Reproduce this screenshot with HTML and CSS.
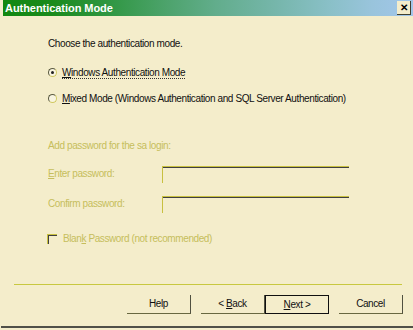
FILE: index.html
```html
<!DOCTYPE html>
<html lang="en">
<head>
    <meta charset="UTF-8">
    <meta name="viewport" content="width=device-width, initial-scale=1.0">
    <title>Authentication Mode</title>
    <link rel="stylesheet" href="styles.css">
</head>
<body>
    <div class="window">
        <div class="titlebar">
            <span class="title">Authentication Mode</span>
            <span class="close">&#x2715;</span>
        </div>

        <div class="content">
            <p class="intro">Choose the authentication mode.</p>

            <div class="option first">
                <span class="radio checked"></span>
                <span class="focus"><u>W</u>indows Authentication Mode</span>
            </div>
            <div class="option">
                <span class="radio"></span>
                <span><u>M</u>ixed Mode (Windows Authentication and SQL Server Authentication)</span>
            </div>

            <div class="sa">
                <p class="sa-title">Add password for the sa login:</p>
                <div class="field">
                    <span class="field-label"><u>E</u>nter password:</span>
                    <span class="box"></span>
                </div>
                <div class="field">
                    <span class="field-label">Confirm password:</span>
                    <span class="box"></span>
                </div>
                <div class="check">
                    <span class="checkbox"></span>
                    <span>Blan<u>k</u> Password (not recommended)</span>
                </div>
            </div>
        </div>

        <div class="separator"></div>

        <div class="buttons">
            <span class="btn">Help</span>
            <span class="btn gap">&lt; <u>B</u>ack</span>
            <span class="btn default"><u>N</u>ext &gt;</span>
            <span class="btn gap">Cancel</span>
        </div>
        <div class="bottom-edge"></div>
    </div>
</body>
</html>
```

FILE: styles.css
```css
body {
    margin: 0;
    padding: 0;
    background-color: #f4edcb;
    font-family: "Liberation Sans", Arial, sans-serif;
    font-size: 10px;
    letter-spacing: -0.4px;
    color: #101010;
}
.window {
    width: 413px;
    height: 330px;
    overflow: hidden;
}
.titlebar {
    height: 16px;
    margin-left: 3px;
    display: flex;
    align-items: center;
    justify-content: space-between;
    background: linear-gradient(to right, #118811 0%, #1a8a1c 12%, #2e9640 25%, #4da36c 40%, #62ad8c 52%, #78b7ae 68%, #8ac0c8 80%, #99c4dc 90%, #a2c6ea 100%);
}
.title {
    color: #ffffff;
    font-weight: bold;
    font-size: 11px;
    letter-spacing: -0.05px;
    padding-left: 2px;
}
.close {
    width: 13px;
    height: 13px;
    margin-right: 2px;
    background: #f4edcb;
    border-right: 1px solid #404030;
    border-bottom: 1px solid #404030;
    font-size: 10px;
    font-weight: bold;
    letter-spacing: 0;
    line-height: 13px;
    text-align: center;
    color: #000;
}
.content {
    padding-left: 48px;
}
.intro {
    margin: 21px 0 0;
    line-height: 13px;
}
.option {
    display: flex;
    align-items: center;
    gap: 5px;
    height: 13px;
    margin-top: 13px;
}
.option.first {
    margin-top: 16px;
}
.radio {
    width: 7px;
    height: 7px;
    border-radius: 50%;
    border: 1px solid;
    border-color: #5a5a40 #d0c860 #d0c860 #5a5a40;
    background: #f8f4e0;
    position: relative;
}
.radio.checked::after {
    content: "";
    position: absolute;
    left: 2px;
    top: 2px;
    width: 3px;
    height: 3px;
    border-radius: 50%;
    background: #202020;
}
.focus {
    border-bottom: 1px dotted #303030;
}
.sa {
    color: #c6be5c;
}
.sa-title {
    margin: 34px 0 0;
    line-height: 13px;
}
.field {
    display: flex;
    align-items: flex-start;
    margin-top: 14px;
    height: 17px;
}
.field + .field {
    margin-top: 13px;
}
.field-label {
    width: 114px;
    padding-top: 2px;
}
.box {
    width: 186px;
    height: 16px;
    border-top: 1px solid #c8c040;
    border-left: 1px solid #c8c040;
    box-shadow: inset 0 1px 0 #404040;
}
.check {
    display: flex;
    align-items: center;
    gap: 6px;
    margin-top: 20px;
    margin-left: -1px;
}
.checkbox {
    width: 9px;
    height: 9px;
    border-top: 1px solid #c8c040;
    border-left: 1px solid #c8c040;
    box-shadow: inset 1px 1px 0 #404040;
}
.separator {
    margin: 40px 11px 0 14px;
    height: 1px;
    background: #c8c840;
}
.buttons {
    display: flex;
    justify-content: flex-end;
    padding-right: 10px;
    margin-top: 10px;
}
.btn {
    width: 63px;
    height: 18px;
    line-height: 18px;
    text-align: center;
    border-right: 1px solid #505040;
    border-bottom: 1px solid #686840;
}
.btn.gap {
    margin-left: 10px;
}
.btn.default {
    width: 62px;
    height: 17px;
    border: 1px solid #101010;
}
.bottom-edge {
    margin: 12px 0 0 1px;
    height: 2px;
    background: #505048;
}
```
